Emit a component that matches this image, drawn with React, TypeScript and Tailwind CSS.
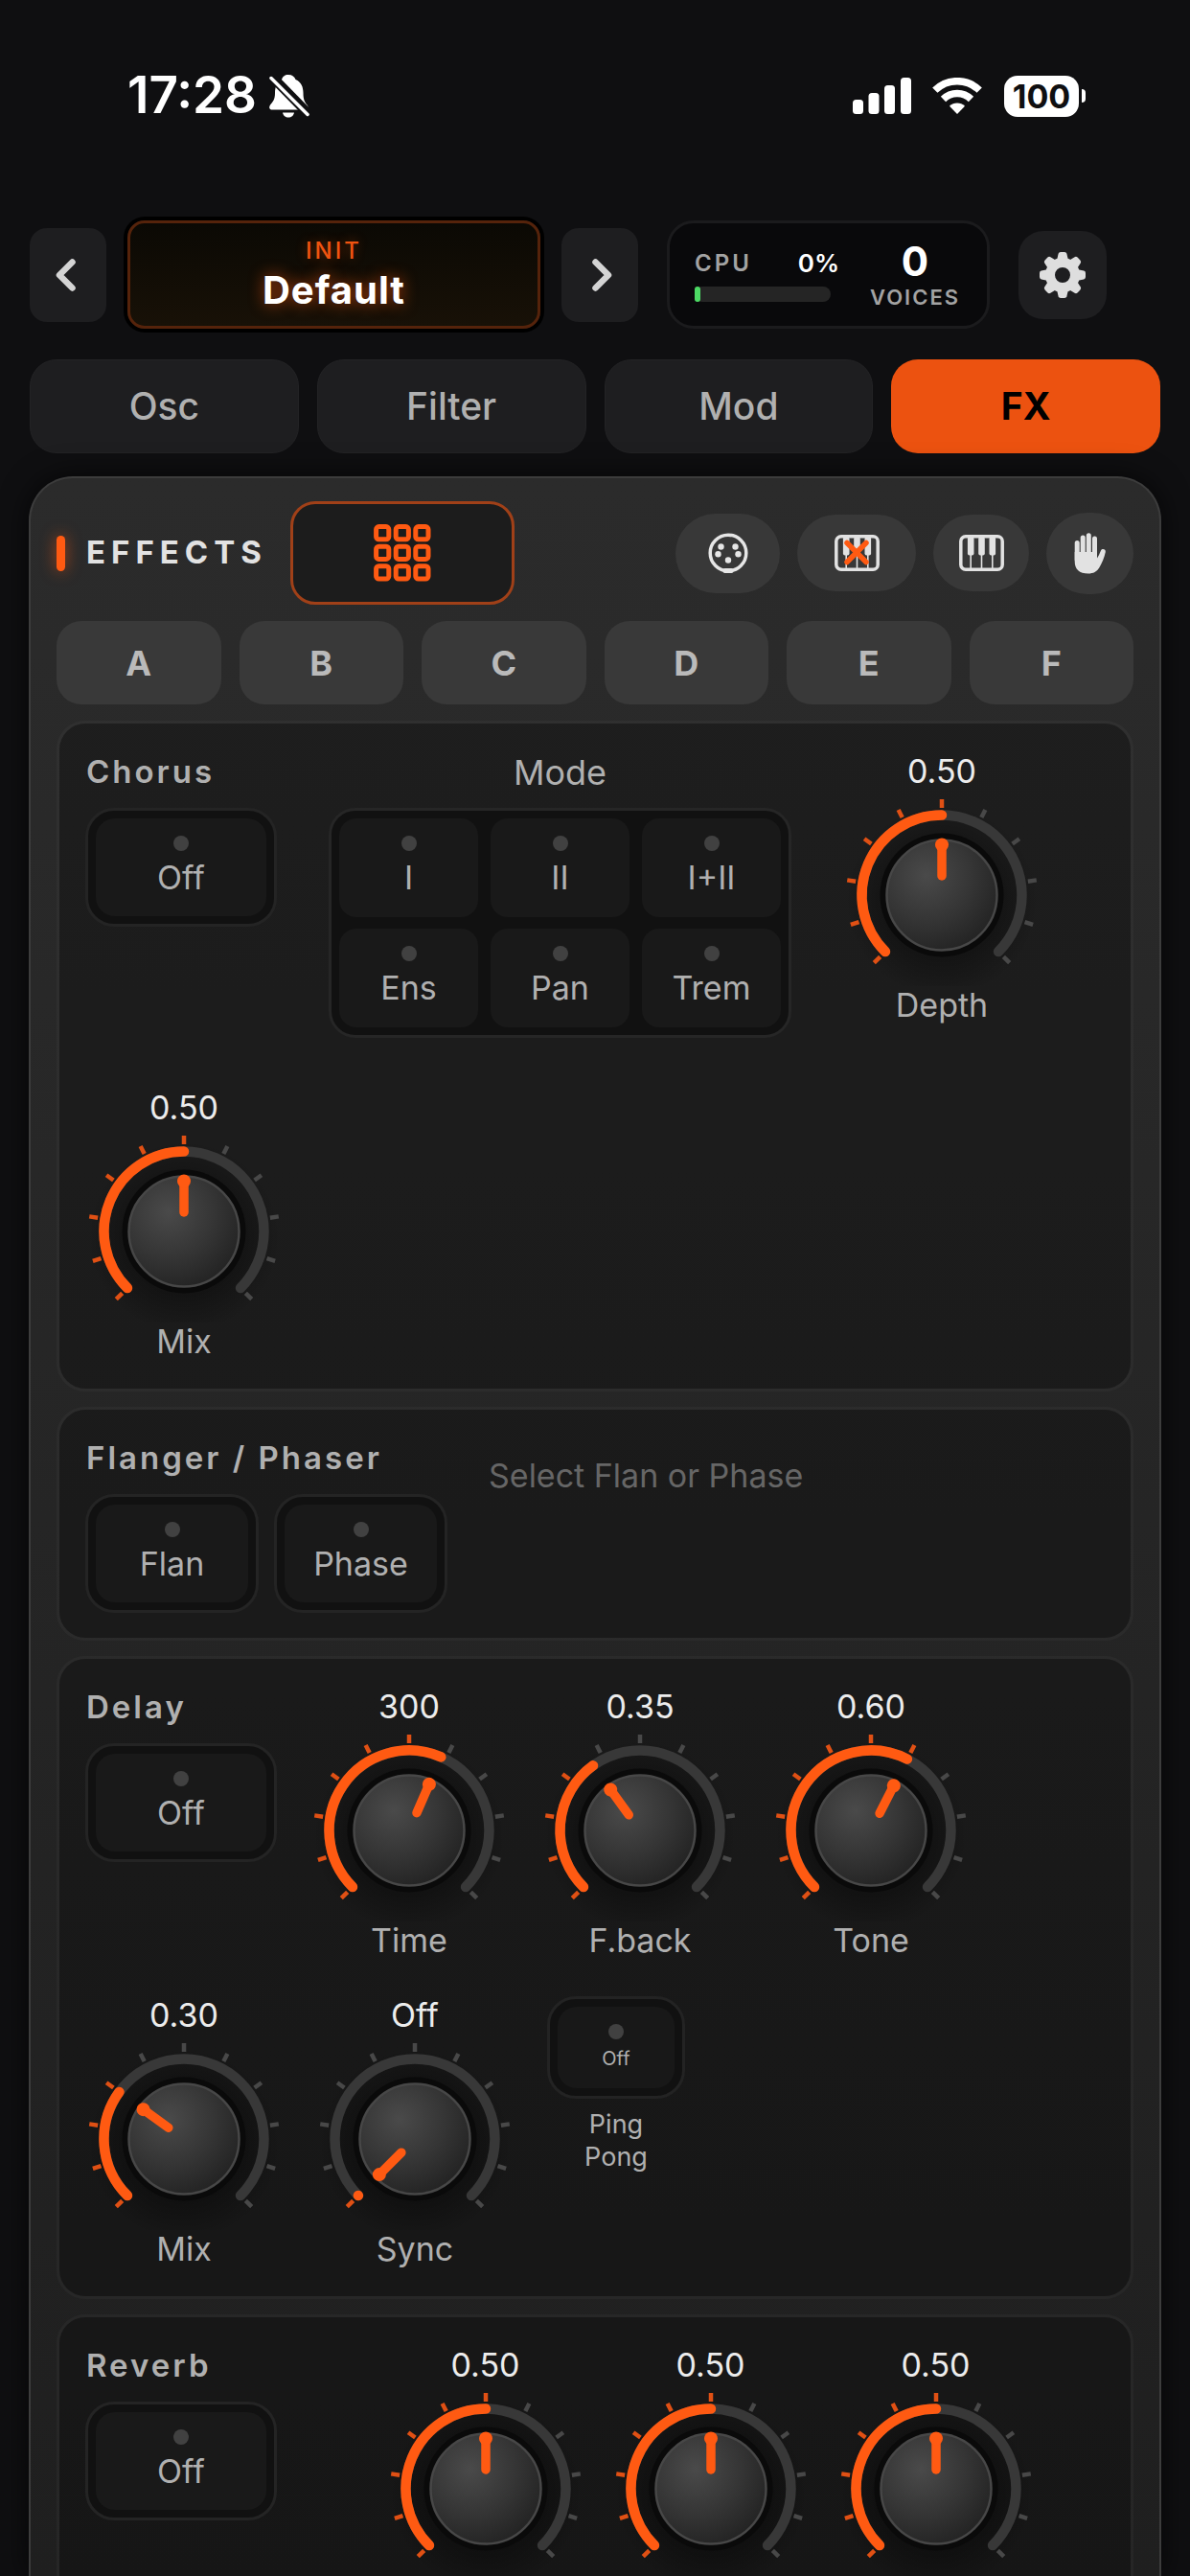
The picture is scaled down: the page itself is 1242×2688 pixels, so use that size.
import React, { useState } from 'react';

const ACCENT = '#ff5a12';

const TABS = ['Osc', 'Filter', 'Mod', 'FX'];
const SLOTS = ['A', 'B', 'C', 'D', 'E', 'F'];
const CHORUS_MODES = ['I', 'II', 'I+II', 'Ens', 'Pan', 'Trem'];
const SYNC_STEPS = ['Off', '1/16', '1/8', '1/4', '1/2', '1/1'];

const fixed = (v: number) => v.toFixed(2);
const millis = (v: number) => String(Math.round(v * 511));
const feedback = (v: number) => (v * 0.95).toFixed(2);
const syncStep = (v: number) => SYNC_STEPS[Math.round(v * 5)];

export default function App() {
  const [activeTab, setActiveTab] = useState('FX');

  return (
    <div className="flex h-screen w-full flex-col overflow-hidden bg-[#0f0f11] font-['Inter','Liberation_Sans',sans-serif] text-[#b0b0b0]">
      <StatusBar />
      <Header />

      <nav className="mt-8 grid shrink-0 grid-cols-4 gap-[19px] px-[31px]">
        {TABS.map((tab) => (
          <button
            key={tab}
            onClick={() => setActiveTab(tab)}
            className={`h-[98px] rounded-[28px] text-[39px] ${
              activeTab === tab
                ? 'bg-[#ec5210] font-bold text-black'
                : 'border border-[#232325] bg-[#1e1e20] font-medium'
            }`}
          >
            {tab}
          </button>
        ))}
      </nav>

      <main className="mx-[30px] mt-6 flex min-h-0 flex-1 flex-col overflow-hidden rounded-t-[46px] border-2 border-b-0 border-[#3c3c3c] bg-linear-to-b from-[#2b2b2b] to-[#1f1f1f] px-[27px] pt-6 shadow-[0_0_30px_#000000aa]">
        <EffectsHeader />

        <div className="mt-[17px] grid shrink-0 grid-cols-6 gap-[19px]">
          {SLOTS.map((slot) => (
            <button
              key={slot}
              className="h-[87px] rounded-[26px] bg-[#393939] text-[36px] font-bold text-[#bababa]"
            >
              {slot}
            </button>
          ))}
        </div>

        <div className="mt-[17px] flex shrink-0 flex-col gap-4">
          <Chorus />
          <FlangerPhaser />
          <Delay />
          <Reverb />
        </div>
      </main>
    </div>
  );
}

function StatusBar() {
  return (
    <div className="flex h-[230px] shrink-0 items-start justify-between pt-[70px] pr-[109px] pl-[133px] text-white">
      <div className="flex h-[60px] items-center gap-3">
        <span className="text-[53px] font-semibold">17:28</span>
        <svg width="43" height="46" viewBox="0 0 43 46">
          <path
            d="M21 1c4 0 6.500 2 7.500 5 6 2.500 8 8 8 14 0 7 1.500 9.500 4 12.500 2 2.500 1.500 5-1.500 5H4c-3 0-3.500-2.500-2-5 3-3.500 5-6 5-12.500 0-6 2-11.500 7-14 1-3 3-5 7-5Z"
            fill="#fff"
          />
          <path d="M15 40.500h12c-.500 3-3 5-6 5s-5.500-2-6-5Z" fill="#fff" />
          <path d="M1 0 43 43" stroke="#0f0f11" strokeWidth="10" />
          <path d="M3 4.500 41 42.500" stroke="#fff" strokeWidth="3.500" strokeLinecap="round" />
        </svg>
      </div>
      <div className="flex h-[60px] items-center">
        <svg width="61" height="38" viewBox="0 0 61 38" fill="#fff">
          <rect x="0" y="23" width="11" height="15" rx="3.500" />
          <rect x="16.500" y="16" width="11" height="22" rx="3.500" />
          <rect x="33" y="8" width="11" height="30" rx="3.500" />
          <rect x="50" y="0" width="11" height="38" rx="3.500" />
        </svg>
        <svg className="ml-[22px]" width="52" height="38" viewBox="0 0 52 38">
          <g fill="none" stroke="#fff" strokeWidth="7.500">
            <path d="M2.800 13.200a33 33 0 0 1 46.400 0" />
            <path d="M11.500 22.500a20.500 20.500 0 0 1 29 0" />
          </g>
          <path d="M26 38l-8-8.200a11.500 11.500 0 0 1 16 0Z" fill="#fff" />
        </svg>
        <div className="ml-[23px] flex h-[43px] w-[78px] items-center justify-center rounded-[14px] bg-white text-[34px] font-bold text-[#0f0f11]">
          100
        </div>
        <div className="ml-[3px] h-[14px] w-1 rounded-r-full bg-white" />
      </div>
    </div>
  );
}

function Header() {
  return (
    <header className="flex h-[113px] shrink-0 items-center pr-[87px] pl-[31px]">
      <StepButton label="Previous preset" d="M17.500 3.500 4 17l13.500 13.500" />
      <button className="mx-[22px] flex h-[113px] flex-1 flex-col items-center justify-center rounded-[18px] border-3 border-[#55230b] bg-linear-to-b from-[#0b0904] to-[#181107] shadow-[0_0_0_4px_#000000]">
        <span className="text-[24px] leading-7 font-medium tracking-[3px] text-[#f05410] [text-shadow:0_0_12px_#ff5a1266]">
          INIT
        </span>
        <span className="mt-1 text-[40px] leading-[46px] font-bold tracking-[1px] text-white [text-shadow:0_0_16px_#ff5a12aa]">
          Default
        </span>
      </button>
      <StepButton label="Next preset" d="M8.500 3.500 22 17 8.500 30.500" />

      <div className="ml-[30px] flex h-[113px] w-[337px] items-center rounded-[28px] border-3 border-[#1b1b1d] bg-[#09090b] pl-[26px]">
        <div className="flex w-[151px] flex-col gap-2">
          <div className="flex items-center justify-between">
            <span className="text-[24px] leading-8 font-semibold tracking-[3px] text-[#a3a3a3]">
              CPU
            </span>
            <span className="text-[26px] leading-8 font-semibold text-white">0%</span>
          </div>
          <div className="h-4 w-[142px] rounded-full bg-[#252525]">
            <div className="h-4 w-[6px] rounded-[3px] bg-[#4cd964]" />
          </div>
        </div>
        <div className="ml-8 flex flex-col items-center">
          <span className="text-[42px] leading-[46px] font-bold text-white">0</span>
          <span className="text-[22px] leading-7 font-semibold tracking-[2px] text-[#a3a3a3]">
            VOICES
          </span>
        </div>
      </div>

      <button
        aria-label="Settings"
        className="ml-[30px] flex size-[92px] items-center justify-center rounded-[26px] bg-[#1e1e20]"
      >
        <svg width="48" height="48" viewBox="-24 -24 48 48">
          {[0, 45, 90, 135, 180, 225, 270, 315].map((deg) => (
            <path
              key={deg}
              d="M-5.800-16-4.400-22.200q.500-1.800 2.400-1.800h4q1.900 0 2.400 1.800L5.800-16Z"
              fill="#dedede"
              transform={`rotate(${deg})`}
            />
          ))}
          <circle r="13" fill="none" stroke="#dedede" strokeWidth="10" />
        </svg>
      </button>
    </header>
  );
}

function StepButton({ label, d }: { label: string; d: string }) {
  return (
    <button
      aria-label={label}
      className="flex h-[98px] w-20 items-center justify-center rounded-[18px] bg-[#1e1e20]"
    >
      <svg width="26" height="34" viewBox="0 0 26 34" fill="none">
        <path d={d} stroke="#d4d4d4" strokeWidth="6.500" strokeLinecap="round" strokeLinejoin="round" />
      </svg>
    </button>
  );
}

function EffectsHeader() {
  return (
    <div className="flex h-[108px] shrink-0 items-center">
      <div className="h-[37px] w-[9px] rounded-full bg-[#ff5a12] shadow-[0_0_16px_#ff5a1299]" />
      <h1 className="ml-[22px] text-[33px] font-bold tracking-[6px] text-[#e2e2e2]">EFFECTS</h1>
      <button
        aria-label="Effect grid"
        className="ml-6 flex h-[108px] w-[234px] items-center justify-center rounded-[26px] border-3 border-[#a04018] bg-[#1c1c1c]"
      >
        <svg width="60" height="60" viewBox="0 0 60 60" fill="none" stroke={ACCENT} strokeWidth="5">
          {[2.6, 23.2, 43.8].map((y) =>
            [2.6, 23.2, 43.8].map((x) => (
              <rect key={`${x}-${y}`} x={x} y={y} width="13.200" height="13.200" rx="2.800" />
            )),
          )}
        </svg>
      </button>

      <div className="ml-auto flex items-center gap-[18px]">
        <button
          aria-label="MIDI"
          className="flex h-[83px] w-[109px] items-center justify-center rounded-full bg-[#383838]"
        >
          <svg width="42" height="42" viewBox="-21 -21 42 42" fill="#e6e6e6">
            <circle r="18.800" fill="none" stroke="#e6e6e6" strokeWidth="3.500" />
            <circle cx="-7.500" cy="-6.500" r="3.200" />
            <circle cx="7.500" cy="-6.500" r="3.200" />
            <circle cx="-10.500" cy="1.300" r="3.200" />
            <circle cx="10.500" cy="1.300" r="3.200" />
            <circle cx="0" cy="7.500" r="3.200" />
            <rect x="-5.500" y="16" width="11" height="5" rx="2" />
          </svg>
        </button>
        <button
          aria-label="Keyboard off"
          className="flex h-20 w-[124px] items-center justify-center rounded-full bg-[#383838]"
        >
          <Keys crossed />
        </button>
        <button
          aria-label="Keyboard"
          className="flex h-20 w-[100px] items-center justify-center rounded-full bg-[#383838]"
        >
          <Keys />
        </button>
        <button
          aria-label="Hold"
          className="flex h-[85px] w-[91px] items-center justify-center rounded-full bg-[#383838]"
        >
          <svg width="34" height="43" viewBox="0 0 34 43" fill="none">
            <g stroke="#e2e2e2" strokeWidth="5" strokeLinecap="round">
              <path d="M3.200 10.500V28M9.200 5V26M15.300 2.800V26M21.500 6V28" />
            </g>
            <path
              d="M.7 20h23.300v6.500c1.500-2 2.600-5 4-8 1.200-2.600 5.400-1.500 4.800 1.500-1.300 6.500-3.800 11.500-6.300 16-2.600 4.500-6.500 6.500-11.700 6.500C5.500 42.500.7 38 .7 30Z"
              fill="#e2e2e2"
            />
          </svg>
        </button>
      </div>
    </div>
  );
}

function Keys({ crossed }: { crossed?: boolean }) {
  return (
    <svg width="47" height="38" viewBox="0 0 47 38" fill="none">
      <rect x="1.800" y="1.800" width="43.400" height="34.400" rx="5" stroke="#e2e2e2" strokeWidth="3.500" />
      {[12.2, 23.5, 34.8].map((x) => (
        <g key={x}>
          <rect x={x - 3.3} y="2" width="6.600" height="19.500" rx="2" fill="#e2e2e2" />
          <path d={`M${x} 20V36`} stroke="#e2e2e2" strokeWidth="1.600" />
        </g>
      ))}
      {crossed && (
        <path d="M13 8.500 33 28.500M33 8.500 13 28.500" stroke={ACCENT} strokeWidth="5.500" strokeLinecap="round" />
      )}
    </svg>
  );
}

function Chorus() {
  const [mode, setMode] = useState('');

  return (
    <Card>
      <Titled title="Chorus">
        <Switch label="Off" className="w-[200px]" />
      </Titled>
      <div className="px-[19px] pb-[18px]">
        <div className="text-center text-[36px] leading-[42px]">Mode</div>
        <div className="mt-4 grid w-[483px] grid-cols-3 gap-x-[13px] gap-y-3 rounded-[28px] border-3 border-[#262626] bg-[#111111] p-2">
          {CHORUS_MODES.map((m) => (
            <button
              key={m}
              aria-pressed={mode === m}
              onClick={() => setMode(mode === m ? '' : m)}
              className="flex h-[103px] flex-col items-center rounded-[18px] bg-[#191919] pt-[18px]"
            >
              <Led on={mode === m} />
              <span className="mt-2 text-[34px] leading-10">{m}</span>
            </button>
          ))}
        </div>
      </div>
      <Knob label="Depth" initial={0.5} />
      <Knob label="Mix" initial={0.5} />
    </Card>
  );
}

function FlangerPhaser() {
  return (
    <Card>
      <Titled title="Flanger / Phaser">
        <Switch label="Flan" className="w-[181px]" />
        <Switch label="Phase" className="w-[181px]" />
      </Titled>
      <p className="px-2 py-[19px] text-[34px] leading-10 text-[#666666]">Select Flan or Phase</p>
    </Card>
  );
}

function Delay() {
  return (
    <Card>
      <Titled title="Delay">
        <Switch label="Off" className="w-[200px]" />
      </Titled>
      <Knob label="Time" initial={0.587} format={millis} />
      <Knob label="F.back" initial={0.367} format={feedback} />
      <Knob label="Tone" initial={0.6} />
      <Knob label="Mix" initial={0.3} />
      <Knob label="Sync" initial={0} format={syncStep} />
      <div className="w-[144px]">
        <button
          aria-label="Ping Pong"
          className="flex h-[107px] w-full rounded-[30px] border-3 border-[#232323] bg-[#111111] p-2"
        >
          <span className="flex h-full flex-1 flex-col items-center rounded-[20px] bg-[#181818] pt-[18px]">
            <Led />
            <span className="mt-[6px] text-[20px] leading-7">Off</span>
          </span>
        </button>
        <div className="mt-[10px] text-center text-[27px] leading-[34px]">
          Ping
          <br />
          Pong
        </div>
      </div>
    </Card>
  );
}

function Reverb() {
  return (
    <Card>
      <Titled title="Reverb">
        <Switch label="Off" className="w-[200px]" />
      </Titled>
      <div className="flex flex-1 justify-center gap-[29px] pl-[6px]">
        <Knob name="Size" initial={0.5} />
        <Knob name="Damping" initial={0.5} />
        <Knob name="Reverb mix" initial={0.5} />
      </div>
    </Card>
  );
}

function Card({ children }: { children: React.ReactNode }) {
  return (
    <section className="flex flex-wrap items-start gap-[35px] rounded-[30px] border-3 border-white/3 bg-black/28 bg-clip-padding px-[27px] pt-[30px] pb-[26px]">
      {children}
    </section>
  );
}

function Titled({ title, children }: { title: string; children: React.ReactNode }) {
  return (
    <div>
      <h2 className="pl-px text-[33px] leading-10 font-semibold tracking-[3px]">{title}</h2>
      <div className="mt-[18px] flex gap-4">{children}</div>
    </div>
  );
}

function Switch({ label, className }: { label: string; className: string }) {
  const [on, setOn] = useState(false);

  return (
    <button
      aria-pressed={on}
      onClick={() => setOn(!on)}
      className={`flex h-[124px] rounded-[30px] border-3 border-[#242424] bg-[#111111] p-2 ${className}`}
    >
      <span className="flex h-full flex-1 flex-col items-center rounded-[20px] bg-[#191919] pt-[18px]">
        <Led on={on} />
        <span className="mt-2 text-[34px] leading-10">{label}</span>
      </span>
    </button>
  );
}

function Led({ on }: { on?: boolean }) {
  return (
    <span className={`block size-4 shrink-0 rounded-full ${on ? 'bg-[#ff5a12]' : 'bg-[#414141]'}`} />
  );
}

// 0deg points straight up, the sweep runs from -135 to 135
function polar(deg: number, r: number) {
  const rad = (deg * Math.PI) / 180;
  return `${(Math.sin(rad) * r).toFixed(2)} ${(-Math.cos(rad) * r).toFixed(2)}`;
}

function arc(from: number, to: number, r: number) {
  return `M${polar(from, r)}A${r} ${r} 0 ${to - from > 180 ? 1 : 0} 1 ${polar(to, r)}`;
}

function Knob({
  label,
  name,
  initial,
  format = fixed,
}: {
  label?: string;
  name?: string;
  initial: number;
  format?: (v: number) => string;
}) {
  const [value, setValue] = useState(initial);
  const angle = -135 + value * 270;

  return (
    <label className="relative flex w-[206px] flex-col items-center pb-[3px]">
      <span className="text-[34px] leading-10 text-[#ececec]">{format(value)}</span>
      <svg width="206" height="204" viewBox="-103 -109 206 204" fill="none">
        <defs>
          <radialGradient id="knob-face" cx="0.36" cy="0.32" r="0.75">
            <stop offset="0" stopColor="#4a4a4a" />
            <stop offset="0.55" stopColor="#353535" />
            <stop offset="1" stopColor="#222222" />
          </radialGradient>
          <radialGradient id="knob-shade">
            <stop offset="0.6" stopColor="#000000" stopOpacity="0.3" />
            <stop offset="1" stopColor="#000000" stopOpacity="0" />
          </radialGradient>
        </defs>
        <circle cy="6" r="100" fill="url(#knob-shade)" />
        {Array.from({ length: 11 }, (_, i) => (
          <path
            key={i}
            d="M0-91V-100"
            stroke={i / 10 <= value + 0.001 ? '#e05014' : '#484848'}
            strokeWidth="4.500"
            transform={`rotate(${-135 + i * 27})`}
          />
        ))}
        <path d={arc(-135, 135, 83.5)} stroke="#383838" strokeWidth="10.500" strokeLinecap="round" />
        <path
          d={arc(-135, Math.max(angle, -134.9), 83.5)}
          stroke={ACCENT}
          strokeWidth="10.500"
          strokeLinecap="round"
        />
        <circle r="64.500" fill="#0a0a0a" />
        <circle r="57.500" fill="url(#knob-face)" stroke="#474747" strokeWidth="2.500" />
        <g transform={`rotate(${angle})`}>
          <path d="M0-20V-50" stroke={ACCENT} strokeWidth="9.500" strokeLinecap="round" />
          <circle cy="-52.500" r="7" fill={ACCENT} />
        </g>
      </svg>
      {label && <span className="text-[34px] leading-10">{label}</span>}
      <input
        type="range"
        min="0"
        max="1"
        step="0.001"
        value={value}
        aria-label={name}
        onChange={(e) => setValue(Number(e.target.value))}
        className="absolute inset-0 size-full cursor-pointer opacity-0"
      />
    </label>
  );
}
